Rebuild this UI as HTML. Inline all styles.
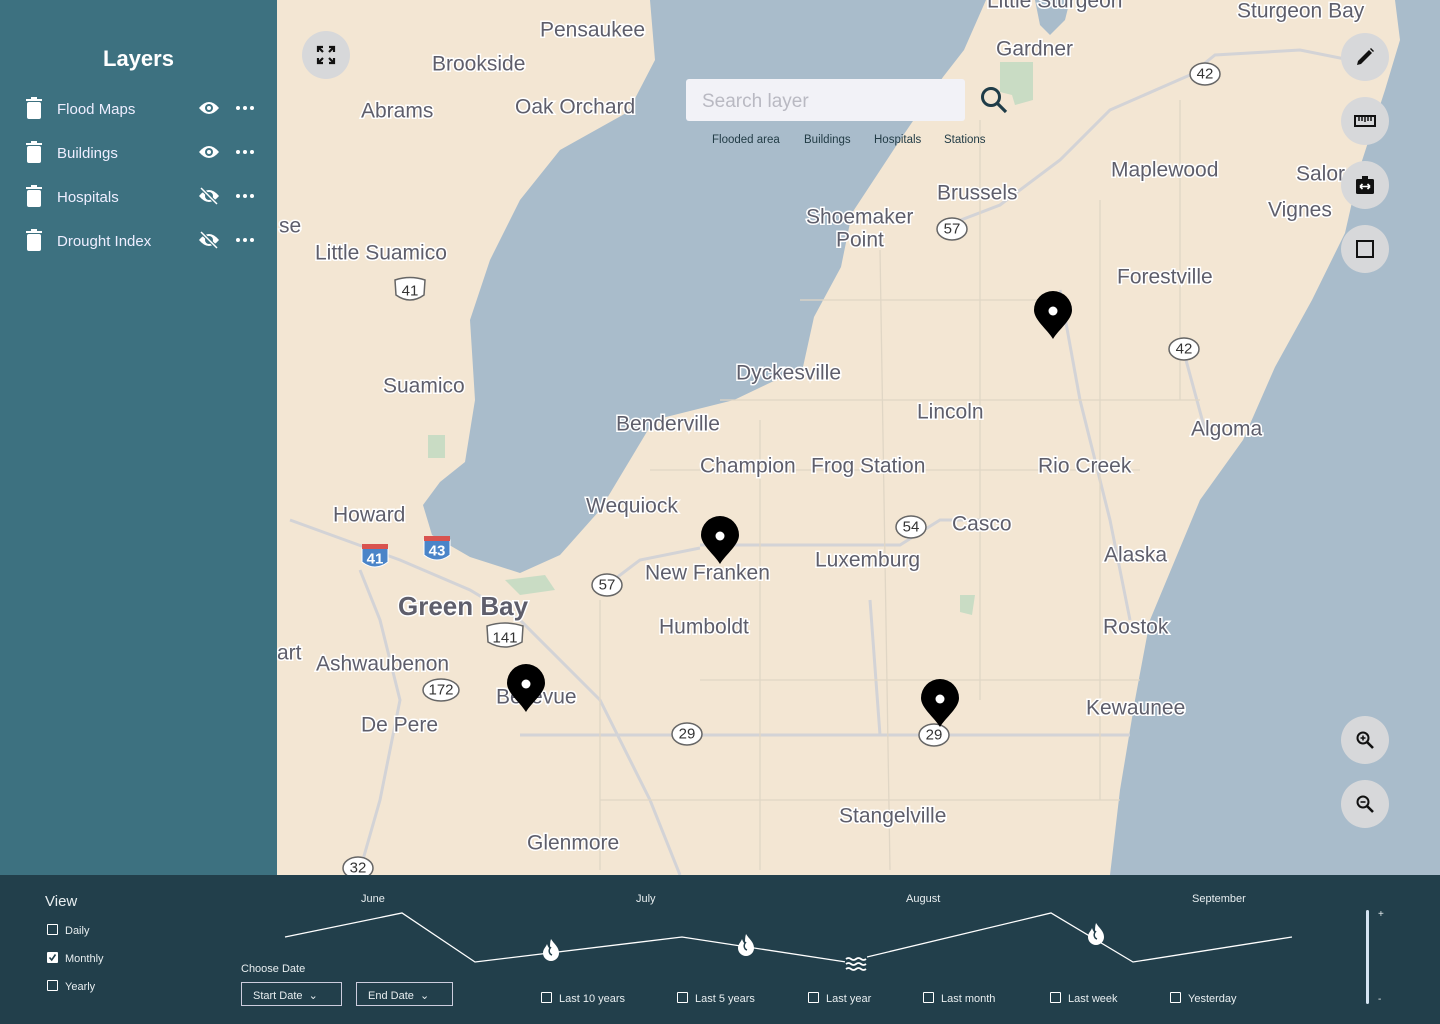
<!DOCTYPE html>
<html><head><meta charset="utf-8"><style>
*{margin:0;padding:0;box-sizing:border-box}
body{width:1440px;height:1024px;overflow:hidden;position:relative;font-family:"Liberation Sans",sans-serif;background:#f3e6d3}
#map{position:absolute;left:0;top:0}
.side{position:absolute;left:0;top:0;width:277px;height:875px;background:#3d7180;color:#fff}
.side h1{position:absolute;left:0;width:277px;text-align:center;top:46px;font-size:22px;font-weight:bold}
.row{position:absolute;left:0;width:277px;height:24px}
.row .lbl{position:absolute;left:57px;top:4px;font-size:15px;color:#eef}
.row svg{position:absolute}
.btn{position:absolute;width:48px;height:48px;border-radius:50%;background:#d7d8da;display:flex;align-items:center;justify-content:center}
.search{position:absolute;left:686px;top:79px;width:279px;height:42px;background:#f2f2f7;border-radius:3px;color:#b9b9c2;font-size:19px;padding:12px 16px}
.tag{position:absolute;top:134px;font-size:11.5px;color:#223c46}
.bottom{position:absolute;left:0;top:875px;width:1440px;height:149px;background:#223f4b;color:#fff}
.t{position:absolute;font-size:11px;color:#e8eef0;white-space:nowrap}
.cb{position:absolute;width:11px;height:11px;border:1.5px solid #fff;border-radius:1px}
.dd{position:absolute;top:107px;height:24px;border:1px solid #ccd;font-size:11px;padding:6px 11px;color:#e8eef0}
</style></head><body>
<svg id="map" width="1440" height="875" viewBox="0 0 1440 875">
<rect width="1440" height="875" fill="#f3e6d3"/>
<path fill="#a9bccb" d="M640,0 L986,0 L964,50 L943,77 L900,140 L852,213 L841,267 L814,317 L803,367 L734,400 L654,420 L630,460 L600,510 L560,555 L520,573 L470,557 L432,535 L423,505 L440,482 L465,462 L475,400 L470,320 L490,260 L520,200 L560,150 L628,112 L655,60 L650,0Z"/>
<path fill="#a9bccb" d="M1395,0 L1440,0 L1440,875 L1110,875 L1120,790 L1135,700 L1150,620 L1175,560 L1200,500 L1243,440 L1275,367 L1312,300 L1345,233 L1360,167 L1385,90 L1400,40Z"/>
<path fill="#a9bccb" d="M1035,0 L1070,0 L1065,20 L1050,35 L1040,25Z"/>
<path fill="#c9dcc4" d="M1000,62 L1033,62 L1033,100 L1015,105 L1012,95 L1000,92Z"/>
<path fill="#c9dcc4" d="M428,435 L445,435 L445,458 L428,458Z"/>
<path fill="#c9dcc4" d="M505,580 L545,575 L555,590 L520,595Z"/>
<path fill="#c9dcc4" d="M960,595 L975,595 L972,615 L960,612Z"/>
<g stroke="#d3d3d6" fill="none" stroke-width="3">
<path d="M520,735 L1130,735"/>
<path d="M700,545 L900,545 L940,520 L1000,520"/>
<path d="M940,228 L1000,205 L1060,160 L1110,110 L1190,75 L1215,55 L1300,50 L1350,60"/>
<path d="M607,585 L640,560 L700,548"/>
<path d="M290,520 L400,560 L470,590 L520,620 L600,700 L650,800 L680,875"/>
<path d="M360,570 L380,620 L400,700 L380,800 L360,870"/>
<path d="M1060,290 L1080,400 L1110,520 L1130,620"/>
<path d="M1183,349 L1205,430"/>
<path d="M870,600 L880,735"/>
</g>
<g stroke="#e0d6c5" fill="none" stroke-width="1.3">
<path d="M800,300 L1050,300 M720,400 L1200,400 M650,470 L1140,470 M700,680 L1140,680 M600,800 L1120,800 M980,120 L980,700 M880,250 L890,870 M760,420 L760,870 M1100,200 L1100,800 M600,600 L600,870 M1180,100 L1180,400"/>
</g>
<g font-family="'Liberation Sans Narrow','Liberation Sans',sans-serif" font-size="21" fill="#5e5e6b" stroke="#fff" stroke-width="3" paint-order="stroke" dominant-baseline="middle">
<text x="540" y="31">Pensaukee</text><text x="432" y="65">Brookside</text><text x="361" y="112">Abrams</text><text x="515" y="108">Oak Orchard</text>
<text x="987" y="2">Little Sturgeon</text><text x="996" y="50">Gardner</text><text x="1237" y="12">Sturgeon Bay</text>
<text x="1111" y="171">Maplewood</text><text x="1296" y="175">Salor</text><text x="1268" y="211">Vignes</text>
<text x="937" y="194">Brussels</text><text x="806" y="218">Shoemaker</text><text x="836" y="241">Point</text>
<text x="315" y="254">Little Suamico</text><text x="279" y="227">se</text><text x="1117" y="278">Forestville</text>
<text x="736" y="374">Dyckesville</text><text x="383" y="387">Suamico</text><text x="917" y="413">Lincoln</text>
<text x="616" y="425">Benderville</text><text x="1191" y="430">Algoma</text><text x="700" y="467">Champion</text>
<text x="811" y="467">Frog Station</text><text x="1038" y="467">Rio Creek</text><text x="586" y="507">Wequiock</text>
<text x="333" y="516">Howard</text><text x="952" y="525">Casco</text><text x="1104" y="556">Alaska</text>
<text x="815" y="561">Luxemburg</text><text x="645" y="574">New Franken</text>
<text x="1103" y="628">Rostok</text><text x="659" y="628">Humboldt</text><text x="277" y="654">art</text>
<text x="316" y="665">Ashwaubenon</text><text x="496" y="698">Bellevue</text><text x="361" y="726">De Pere</text>
<text x="1086" y="709">Kewaunee</text><text x="839" y="817">Stangelville</text><text x="527" y="844">Glenmore</text>
<text x="398" y="608" font-size="26" font-weight="bold">Green Bay</text>
</g>
<g font-family="'Liberation Sans',sans-serif" font-size="15" text-anchor="middle" dominant-baseline="central" fill="#333">
<g stroke="#666" stroke-width="1.5" fill="#fff">
<ellipse cx="1205" cy="74" rx="15" ry="11"/><ellipse cx="1184" cy="349" rx="15" ry="11"/>
<ellipse cx="952" cy="229" rx="15" ry="11"/><ellipse cx="607" cy="585" rx="15" ry="11"/>
<ellipse cx="911" cy="527" rx="15" ry="11"/><ellipse cx="687" cy="734" rx="15" ry="11"/>
<ellipse cx="934" cy="735" rx="15" ry="11"/><ellipse cx="358" cy="868" rx="15" ry="11"/>
<path d="M395,280 Q410,275 425,280 L424,295 Q410,305 396,295Z"/>
<path d="M487,626 Q505,620 523,626 L522,642 Q505,652 488,642Z"/>
<ellipse cx="441" cy="690" rx="18" ry="11"/>
</g>
<text x="1205" y="74">42</text><text x="1184" y="349">42</text><text x="952" y="229">57</text><text x="607" y="585">57</text>
<text x="911" y="527">54</text><text x="687" y="734">29</text><text x="934" y="735">29</text><text x="358" y="868">32</text>
<text x="410" y="291">41</text><text x="505" y="638">141</text><text x="441" y="690">172</text>
<path d="M362,548 L388,548 L388,562 Q375,572 362,562Z" fill="#4a84c8" stroke="#fff"/>
<path d="M362,544 L388,544 L388,549 L362,549Z" fill="#d9534f"/>
<text x="375" y="559" fill="#fff" font-weight="bold">41</text>
<path d="M424,540 L450,540 L450,555 Q437,565 424,555Z" fill="#4a84c8" stroke="#fff"/>
<path d="M424,536 L450,536 L450,541 L424,541Z" fill="#d9534f"/>
<text x="437" y="551" fill="#fff" font-weight="bold">43</text>
</g>
<g fill="#000">
<g transform="translate(1053,315)"><path d="M0,24 C-6,14 -19,5 -19,-5 A19,19 0 0 1 19,-5 C19,5 6,14 0,24Z"/><circle cy="-4" r="4.5" fill="#fff"/></g>
<g transform="translate(720,540)"><path d="M0,24 C-6,14 -19,5 -19,-5 A19,19 0 0 1 19,-5 C19,5 6,14 0,24Z"/><circle cy="-4" r="4.5" fill="#fff"/></g>
<g transform="translate(526,688)"><path d="M0,24 C-6,14 -19,5 -19,-5 A19,19 0 0 1 19,-5 C19,5 6,14 0,24Z"/><circle cy="-4" r="4.5" fill="#fff"/></g>
<g transform="translate(940,703)"><path d="M0,24 C-6,14 -19,5 -19,-5 A19,19 0 0 1 19,-5 C19,5 6,14 0,24Z"/><circle cy="-4" r="4.5" fill="#fff"/></g>
</g>
</svg>

<div class="side">
<h1>Layers</h1>
<div class="row" style="top:97px"><svg style="left:26px;top:0" width="16" height="22" viewBox="0 0 16 22"><rect x="1" y="5" width="14" height="17" rx="2" fill="#fff"/><rect x="0" y="2" width="16" height="2" fill="#fff"/><rect x="5" y="0" width="6" height="2" fill="#fff"/></svg><span class="lbl">Flood Maps</span>
<svg style="left:198px;top:3px" width="22" height="16" viewBox="0 0 22 16"><path d="M1,8 Q11,-4 21,8 Q11,20 1,8Z" fill="#fff"/><circle cx="11" cy="8" r="4" fill="#3d7180"/><circle cx="11" cy="8" r="2" fill="#fff"/></svg>
<svg style="left:236px;top:9px" width="18" height="4"><circle cx="2" cy="2" r="2" fill="#fff"/><circle cx="9" cy="2" r="2" fill="#fff"/><circle cx="16" cy="2" r="2" fill="#fff"/></svg></div>
<div class="row" style="top:141px"><svg style="left:26px;top:0" width="16" height="22" viewBox="0 0 16 22"><rect x="1" y="5" width="14" height="17" rx="2" fill="#fff"/><rect x="0" y="2" width="16" height="2" fill="#fff"/><rect x="5" y="0" width="6" height="2" fill="#fff"/></svg><span class="lbl">Buildings</span>
<svg style="left:198px;top:3px" width="22" height="16" viewBox="0 0 22 16"><path d="M1,8 Q11,-4 21,8 Q11,20 1,8Z" fill="#fff"/><circle cx="11" cy="8" r="4" fill="#3d7180"/><circle cx="11" cy="8" r="2" fill="#fff"/></svg>
<svg style="left:236px;top:9px" width="18" height="4"><circle cx="2" cy="2" r="2" fill="#fff"/><circle cx="9" cy="2" r="2" fill="#fff"/><circle cx="16" cy="2" r="2" fill="#fff"/></svg></div>
<div class="row" style="top:185px"><svg style="left:26px;top:0" width="16" height="22" viewBox="0 0 16 22"><rect x="1" y="5" width="14" height="17" rx="2" fill="#fff"/><rect x="0" y="2" width="16" height="2" fill="#fff"/><rect x="5" y="0" width="6" height="2" fill="#fff"/></svg><span class="lbl">Hospitals</span>
<svg style="left:198px;top:2px" width="22" height="18" viewBox="0 0 22 18"><path d="M1,9 Q11,-3 21,9 Q11,21 1,9Z" fill="#fff"/><circle cx="11" cy="9" r="4" fill="#3d7180"/><path d="M3,1 L19,17" stroke="#3d7180" stroke-width="3.5"/><path d="M3,1 L19,17" stroke="#fff" stroke-width="1.5"/></svg>
<svg style="left:236px;top:9px" width="18" height="4"><circle cx="2" cy="2" r="2" fill="#fff"/><circle cx="9" cy="2" r="2" fill="#fff"/><circle cx="16" cy="2" r="2" fill="#fff"/></svg></div>
<div class="row" style="top:229px"><svg style="left:26px;top:0" width="16" height="22" viewBox="0 0 16 22"><rect x="1" y="5" width="14" height="17" rx="2" fill="#fff"/><rect x="0" y="2" width="16" height="2" fill="#fff"/><rect x="5" y="0" width="6" height="2" fill="#fff"/></svg><span class="lbl">Drought Index</span>
<svg style="left:198px;top:2px" width="22" height="18" viewBox="0 0 22 18"><path d="M1,9 Q11,-3 21,9 Q11,21 1,9Z" fill="#fff"/><circle cx="11" cy="9" r="4" fill="#3d7180"/><path d="M3,1 L19,17" stroke="#3d7180" stroke-width="3.5"/><path d="M3,1 L19,17" stroke="#fff" stroke-width="1.5"/></svg>
<svg style="left:236px;top:9px" width="18" height="4"><circle cx="2" cy="2" r="2" fill="#fff"/><circle cx="9" cy="2" r="2" fill="#fff"/><circle cx="16" cy="2" r="2" fill="#fff"/></svg></div>
</div>

<div class="btn" style="left:302px;top:31px"><svg width="20" height="20" viewBox="0 0 20 20" fill="none" stroke="#111" stroke-width="2.2"><path d="M2,7V2H7M2,2L7,7M13,2H18V7M18,2L13,7M2,13V18H7M2,18L7,13M18,13V18H13M18,18L13,13"/></svg></div>

<div class="search">Search layer</div>
<svg style="position:absolute;left:980px;top:86px" width="30" height="28" viewBox="0 0 30 28"><circle cx="11" cy="11" r="8.5" fill="none" stroke="#1f3c48" stroke-width="3"/><path d="M17,17 L26,26" stroke="#1f3c48" stroke-width="3.2"/></svg>
<span class="tag" style="left:712px">Flooded area</span><span class="tag" style="left:804px">Buildings</span><span class="tag" style="left:874px">Hospitals</span><span class="tag" style="left:944px">Stations</span>

<div class="btn" style="left:1341px;top:33px"><svg width="20" height="20" viewBox="0 0 20 20"><path d="M2,18 L3,14 L14,3 L17,6 L6,17Z" fill="#111"/><path d="M15,2 L16,1 L19,4 L18,5Z" fill="#111"/></svg></div>
<div class="btn" style="left:1341px;top:97px"><svg width="22" height="12" viewBox="0 0 22 12"><rect x="1" y="1" width="20" height="10" fill="none" stroke="#111" stroke-width="2"/><path d="M5,2V6M8,2V6M11,2V7M14,2V6M17,2V6" stroke="#111" stroke-width="1.5"/></svg></div>
<div class="btn" style="left:1341px;top:161px"><svg width="20" height="20" viewBox="0 0 20 20"><rect x="1" y="4" width="18" height="15" rx="1.5" fill="#111"/><rect x="7" y="1" width="6" height="4" fill="#111"/><path d="M5,11.5H15M5,11.5L7.5,9M5,11.5L7.5,14M15,11.5L12.5,9M15,11.5L12.5,14" stroke="#fff" stroke-width="1.6" fill="none"/></svg></div>
<div class="btn" style="left:1341px;top:225px"><svg width="18" height="18"><rect x="1" y="1" width="16" height="16" fill="none" stroke="#111" stroke-width="2"/></svg></div>
<div class="btn" style="left:1341px;top:716px"><svg width="20" height="20" viewBox="0 0 20 20"><circle cx="8" cy="8" r="5.5" fill="none" stroke="#111" stroke-width="2"/><path d="M12,12L18,18" stroke="#111" stroke-width="2.6"/><path d="M5.5,8H10.5M8,5.5V10.5" stroke="#111" stroke-width="1.6"/></svg></div>
<div class="btn" style="left:1341px;top:780px"><svg width="20" height="20" viewBox="0 0 20 20"><circle cx="8" cy="8" r="5.5" fill="none" stroke="#111" stroke-width="2"/><path d="M12,12L18,18" stroke="#111" stroke-width="2.6"/><path d="M5.5,8H10.5" stroke="#111" stroke-width="1.6"/></svg></div>

<div class="bottom">
<span class="t" style="left:45px;top:18px;font-size:15px">View</span>
<div class="cb" style="left:47px;top:49px"></div><span class="t" style="left:65px;top:50px">Daily</span>
<div class="cb" style="left:47px;top:77px;background:#fff"><svg style="position:absolute;left:0;top:0" width="9" height="9"><path d="M1.5,4.5L3.7,7L7.5,1.5" stroke="#223f4b" stroke-width="1.6" fill="none"/></svg></div><span class="t" style="left:65px;top:78px">Monthly</span>
<div class="cb" style="left:47px;top:105px"></div><span class="t" style="left:65px;top:106px">Yearly</span>
<span class="t" style="left:241px;top:88px">Choose Date</span>
<div class="dd" style="left:241px;width:101px">Start Date &nbsp;⌄</div>
<div class="dd" style="left:356px;width:97px">End Date &nbsp;⌄</div>
<span class="t" style="left:361px;top:18px">June</span><span class="t" style="left:636px;top:18px">July</span><span class="t" style="left:906px;top:18px">August</span><span class="t" style="left:1192px;top:18px">September</span>
<svg style="position:absolute;left:0;top:0" width="1440" height="149">
<polyline points="285,62 402,38 475,87 682,62 846,87 1051,38 1133,87 1292,62" fill="none" stroke="#fff" stroke-width="1.3"/>
<g fill="#fff">
<path transform="translate(551,75)" d="M0,-11 C3,-6 8,-3 8,3 A8,8 0 0 1 -8,3 C-8,-1 -5,-3 -4,-6 C-3,-3 -2,-2 -1,-1 C-1,-5 -1,-8 0,-11Z"/>
<path transform="translate(746,70)" d="M0,-11 C3,-6 8,-3 8,3 A8,8 0 0 1 -8,3 C-8,-1 -5,-3 -4,-6 C-3,-3 -2,-2 -1,-1 C-1,-5 -1,-8 0,-11Z"/>
<path transform="translate(1096,59)" d="M0,-11 C3,-6 8,-3 8,3 A8,8 0 0 1 -8,3 C-8,-1 -5,-3 -4,-6 C-3,-3 -2,-2 -1,-1 C-1,-5 -1,-8 0,-11Z"/>
</g>
<g fill="none" stroke="#223f4b" stroke-width="1.5"><path d="M551,72 C548,75 549,79 552,80"/><path d="M746,67 C743,70 744,74 747,75"/><path d="M1096,56 C1093,59 1094,63 1097,64"/></g>
<rect x="845" y="81" width="22" height="16" fill="#223f4b"/>
<path d="M846,84 q2.5,-2 5,0 t5,0 t5,0 t5,0 M846,89 q2.5,-2 5,0 t5,0 t5,0 t5,0 M846,94 q2.5,-2 5,0 t5,0 t5,0 t5,0" stroke="#fff" stroke-width="1.8" fill="none"/>
<rect x="1366" y="35" width="3" height="94" rx="1.5" fill="#d5e4f2"/>
</svg>
<span class="t" style="left:1378px;top:34px;font-size:10px">+</span><span class="t" style="left:1378px;top:119px;font-size:10px">-</span>
<div class="cb" style="left:541px;top:117px"></div><span class="t" style="left:559px;top:118px">Last 10 years</span>
<div class="cb" style="left:677px;top:117px"></div><span class="t" style="left:695px;top:118px">Last 5 years</span>
<div class="cb" style="left:808px;top:117px"></div><span class="t" style="left:826px;top:118px">Last year</span>
<div class="cb" style="left:923px;top:117px"></div><span class="t" style="left:941px;top:118px">Last month</span>
<div class="cb" style="left:1050px;top:117px"></div><span class="t" style="left:1068px;top:118px">Last week</span>
<div class="cb" style="left:1170px;top:117px"></div><span class="t" style="left:1188px;top:118px">Yesterday</span>
</div>
</body></html>
